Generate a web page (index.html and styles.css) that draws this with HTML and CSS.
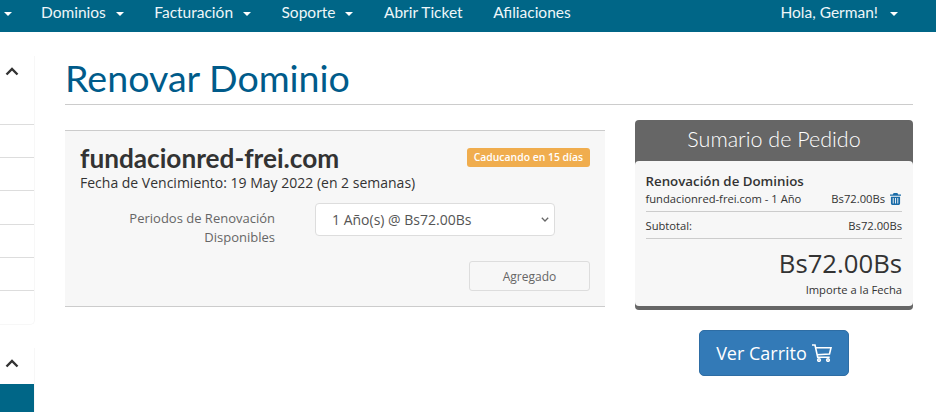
FILE: index.html
```html
<!DOCTYPE html>
<html lang="en">

<head>
    <meta charset="UTF-8" />
    <title>Renovar Dominio</title>
    <link rel="stylesheet" href="styles.css">
</head>

<body>
    <nav class="navbar">
        <ul class="nav-left">
            <li class="stub"><span class="caret"></span></li>
            <li>Dominios <span class="caret"></span></li>
            <li>Facturación <span class="caret"></span></li>
            <li>Soporte <span class="caret"></span></li>
            <li>Abrir Ticket</li>
            <li>Afiliaciones</li>
        </ul>
        <div class="nav-user">Hola, German! <span class="caret"></span></div>
    </nav>

    <div class="page">
        <aside class="sidebar">
            <div class="side-panel">
                <div class="side-head">
                    <svg class="chevron" viewBox="0 0 14 9"><path d="M1.500 7.500 7 2l5.500 5.500" /></svg>
                </div>
                <div class="side-row"></div>
                <div class="side-row"></div>
                <div class="side-row"></div>
                <div class="side-row"></div>
                <div class="side-row"></div>
                <div class="side-row last"></div>
            </div>
            <div class="side-panel second">
                <div class="side-head short">
                    <svg class="chevron" viewBox="0 0 14 9"><path d="M1.500 7.500 7 2l5.500 5.500" /></svg>
                </div>
                <div class="side-active"></div>
            </div>
        </aside>

        <main class="content">
            <h1 class="page-title">Renovar Dominio</h1>

            <div class="columns">
                <section class="renewal">
                    <div class="renewal-top">
                        <h2 class="domain">fundacionred-frei.com</h2>
                        <span class="badge">Caducando en 15 días</span>
                    </div>
                    <p class="expiry">Fecha de Vencimiento: 19 May 2022 (en 2 semanas)</p>
                    <div class="period">
                        <label class="period-label">Periodos de Renovación Disponibles</label>
                        <div class="select-wrap">
                            <select class="period-select">
                                <option>1 Año(s) @ Bs72.00Bs</option>
                            </select>
                            <svg class="select-arrow" viewBox="0 0 8 5"><path d="M.8.8 4 4 7.200.8" /></svg>
                        </div>
                    </div>
                    <div class="renewal-actions">
                        <button class="btn-added" type="button">Agregado</button>
                    </div>
                </section>

                <div class="side-column">
                    <section class="summary">
                        <div class="summary-title">Sumario de Pedido</div>
                        <div class="summary-body">
                            <div class="summary-group">Renovación de Dominios</div>
                            <div class="summary-line item">
                                <span>fundacionred-frei.com - 1 Año</span>
                                <span class="price">Bs72.00Bs
                                    <svg class="trash" viewBox="0 0 12 13"><path d="M4 0h4l1 1.500h3V3H0V1.500h3zM1 4h10v7.500A1.500 1.500 0 0 1 9.500 13h-7A1.500 1.500 0 0 1 1 11.500zm2 1.500V11.500h1V5.500zm2.500 0V11.500h1V5.500zm2.500 0V11.500h1V5.500z" fill-rule="evenodd" /></svg>
                                </span>
                            </div>
                            <div class="summary-line subtotal">
                                <span>Subtotal:</span>
                                <span>Bs72.00Bs</span>
                            </div>
                            <div class="total">Bs72.00Bs</div>
                            <div class="total-label">Importe a la Fecha</div>
                        </div>
                    </section>
                    <button class="btn-cart" type="button">Ver Carrito
                        <svg class="cart" viewBox="0 0 20 18"><path d="M0 1h3l2.700 12.200h12M3.700 3.800h15.300l-1.500 6.200-12.400.8" /><circle cx="7" cy="16" r="1.300" /><circle cx="16" cy="16" r="1.300" /></svg>
                    </button>
                </div>
            </div>
        </main>
    </div>
</body>

</html>
```

FILE: styles.css
```css
* {
    box-sizing: border-box;
}

body {
    margin: 0;
    height: 412px;
    overflow: hidden;
    background-color: #fff;
    font-family: "Open Sans", sans-serif;
    color: #333;
}

/* top bar */
.navbar {
    display: flex;
    justify-content: space-between;
    align-items: center;
    height: 32px;
    padding: 0 38px 8px 0;
    background-color: #006687;
    color: #eef6f9;
    font-family: Lato, sans-serif;
    font-size: 15.500px;
}

.nav-left {
    display: flex;
    margin: 0;
    padding: 0;
    list-style: none;
}

.nav-left li {
    margin-right: 30.500px;
    white-space: nowrap;
}

.nav-left .stub {
    width: 10.500px;
}

.stub .caret {
    margin-left: 4px;
}

.caret {
    display: inline-block;
    width: 0;
    height: 0;
    margin-left: 6px;
    vertical-align: middle;
    border-top: 4px solid #fff;
    border-left: 4px solid transparent;
    border-right: 4px solid transparent;
}

.nav-user .caret {
    margin-left: 8px;
}

.page {
    display: flex;
}

/* left menu, mostly cut off by the window */
.sidebar {
    flex: 0 0 35px;
    padding-top: 24px;
}

.side-panel {
    border-right: 1px solid #f7f7f7;
    border-bottom: 1px solid #f7f7f7;
    border-radius: 0 0 5px 0;
    margin-bottom: 23px;
}

.side-panel.second {
    margin-bottom: 0;
    border-bottom: 0;
    border-radius: 0;
}

.side-head {
    height: 68px;
    padding: 11px 0 0 5px;
}

.side-head.short {
    height: 36px;
}

.chevron {
    display: block;
    width: 14px;
    height: 9px;
    fill: none;
    stroke: #333;
    stroke-width: 2.400;
}

.side-row {
    height: 33.200px;
    border-top: 1px solid #ddd;
}

.side-row.last {
    height: 34px;
}

.side-active {
    height: 28px;
    background-color: #006687;
}

/* main column */
.content {
    flex: 1;
    padding: 0 23px 0 30px;
}

.page-title {
    margin: 0;
    padding: 26px 0 5px;
    height: 73px;
    border-bottom: 1px solid #ccc;
    color: #005b8a;
    font-family: Lato, sans-serif;
    font-size: 37.600px;
    font-weight: 400;
    line-height: 40px;
}

.columns {
    display: flex;
    gap: 30px;
    align-items: flex-start;
    padding-top: 15px;
}

.renewal {
    flex: 0 0 540px;
    height: 177px;
    margin-top: 10px;
    padding: 14px 15px 0;
    background-color: #f7f7f7;
    border-top: 1px solid #ccc;
    border-bottom: 1px solid #ccc;
}

.renewal-top {
    display: flex;
    justify-content: space-between;
    align-items: flex-start;
}

.domain {
    margin: 0;
    color: #333;
    font-family: Lato, sans-serif;
    font-size: 26.200px;
    font-weight: 700;
    line-height: 26px;
}

.badge {
    margin-top: 3px;
    padding: 3px 7px;
    border-radius: 3px;
    background-color: #f0ad4e;
    color: #fff;
    font-size: 10.400px;
    font-weight: 600;
    line-height: 13px;
}

.expiry {
    margin: 3px 0 0;
    font-size: 14px;
    line-height: 18px;
}

.period {
    display: flex;
    align-items: flex-start;
    margin-top: 11px;
}

.period-label {
    flex: 0 0 195px;
    padding-top: 6px;
    color: #666;
    font-size: 13px;
    line-height: 19px;
    text-align: right;
}

.select-wrap {
    position: relative;
    margin-left: 40px;
}

.period-select {
    display: block;
    width: 240px;
    height: 33px;
    padding: 0 16px;
    border: 1px solid #ddd;
    border-radius: 4px;
    background-color: #fff;
    color: #555;
    font-family: inherit;
    font-size: 14px;
    appearance: none;
}

.select-arrow {
    position: absolute;
    top: 14px;
    right: 6px;
    width: 8px;
    height: 5px;
    fill: none;
    stroke: #666;
    stroke-width: 1.300;
}

.renewal-actions {
    display: flex;
    justify-content: flex-end;
    margin-top: 14px;
}

.btn-added {
    width: 121px;
    height: 30px;
    border: 1px solid #ddd;
    border-radius: 3px;
    background-color: #f7f7f7;
    color: #666;
    font-family: inherit;
    font-size: 12px;
}

/* order summary */
.side-column {
    flex: 0 0 278px;
    display: flex;
    flex-direction: column;
    align-items: center;
}

.summary {
    width: 100%;
    border-radius: 4px;
    background-color: #666;
    padding-bottom: 4px;
}

.summary-title {
    height: 41px;
    color: #fff;
    font-family: Lato, sans-serif;
    font-size: 21.500px;
    font-weight: 300;
    line-height: 39px;
    text-align: center;
}

.summary-body {
    height: 145px;
    padding: 12px 11px 0 10.500px;
    border-radius: 4px;
    background-color: #f7f7f7;
}

.summary-group {
    font-size: 13.300px;
    font-weight: 600;
    line-height: 17px;
}

.summary-line {
    display: flex;
    justify-content: space-between;
    align-items: center;
    font-size: 11.200px;
}

.summary-line.item {
    height: 22px;
    padding-bottom: 4px;
    border-bottom: 1px solid #ccc;
}

.summary-line.subtotal {
    height: 27px;
    padding-top: 1px;
    border-bottom: 1px solid #ccc;
}

.price {
    display: flex;
    align-items: center;
    gap: 5px;
    margin-right: 1px;
}

.trash {
    width: 11px;
    height: 12px;
    fill: #1a6ca8;
}

.total {
    margin-top: 7px;
    font-size: 25.700px;
    line-height: 35px;
    text-align: right;
}

.total-label {
    margin-top: 2px;
    font-size: 11.200px;
    line-height: 14px;
    text-align: right;
}

.btn-cart {
    display: flex;
    align-items: center;
    justify-content: center;
    gap: 5px;
    width: 150px;
    height: 46px;
    margin-top: 20px;
    border: 1px solid #2e6da4;
    border-radius: 5px;
    background-color: #337ab7;
    color: #fff;
    font-family: inherit;
    font-size: 18px;
}

.cart {
    width: 20px;
    height: 18px;
    fill: none;
    stroke: #fff;
    stroke-width: 1.600;
}
```
